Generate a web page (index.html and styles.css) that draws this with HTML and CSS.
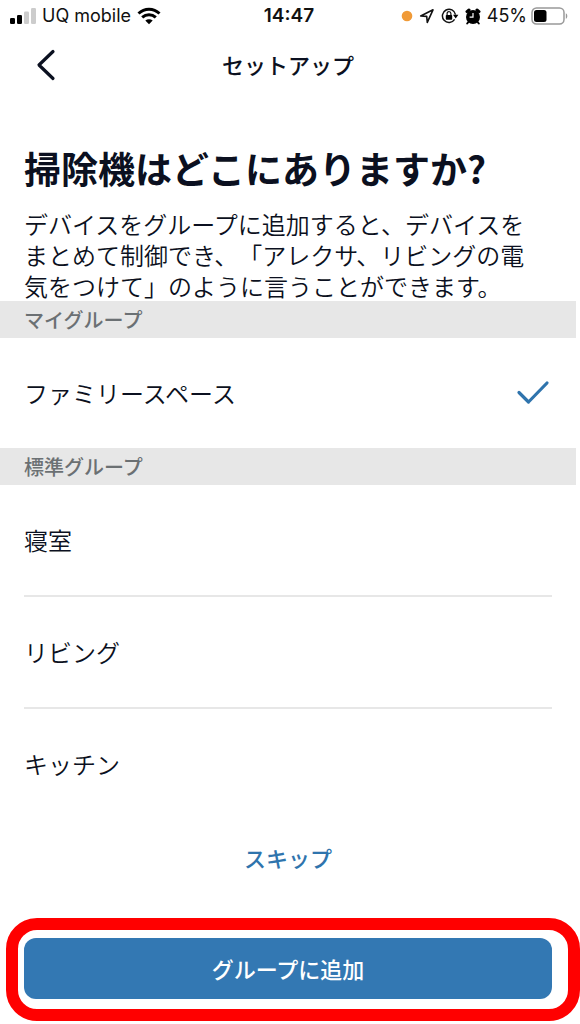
FILE: index.html
```html
<!DOCTYPE html>
<html lang="ja">
<head>
<meta charset="utf-8">
<meta name="viewport" content="width=device-width, initial-scale=1">
<title>セットアップ</title>
<link rel="stylesheet" href="styles.css">
</head>
<body>
<div class="screen">
  <div class="status">
    <div class="status-side">
      <svg class="signal" width="26" height="16" viewBox="0 0 26 16" aria-hidden="true">
        <rect x="0" y="10" width="5" height="6" rx="1.2"/>
        <rect x="7" y="7" width="5" height="9" rx="1.2"/>
        <rect x="14" y="3.500" width="5" height="12.500" rx="1.200" fill="#ccc"/>
        <rect x="21" y="0" width="5" height="16" rx="1.200" fill="#ccc"/>
      </svg>
      <span>UQ mobile</span>
      <svg width="24" height="18" viewBox="0 0 24 18" aria-hidden="true">
        <path d="M1.500 6.500C7.500.700 16.500.700 22.500 6.500M5.200 10.400c4-3.700 9.600-3.700 13.600 0" fill="none" stroke="#000" stroke-width="3"/>
        <path d="M12 17.200l-3.700-3.700c2.200-1.800 5.200-1.800 7.400 0z"/>
      </svg>
    </div>
    <time class="clock">14:47</time>
    <div class="status-side status-right">
      <svg width="12" height="12" viewBox="0 0 12 12" aria-hidden="true"><circle cx="6" cy="6" r="5.300" fill="#f09a37"/></svg>
      <svg width="16" height="16" viewBox="0 0 16 16" aria-hidden="true"><path d="M1.700 8L14 1.800 8.300 14.300 7.700 8.400z" fill="none" stroke="#111" stroke-width="1.600" stroke-linejoin="round"/></svg>
      <svg width="18" height="16" viewBox="0 0 18 16" aria-hidden="true">
        <path d="M13.600 11.400A6.600 6.600 0 1 1 14.500 6.600" fill="none" stroke="#111" stroke-width="1.500"/>
        <path d="M12 6.800h5.400l-2.700 3.600z"/>
        <rect x="4.800" y="7" width="6.400" height="4.800" rx=".8"/>
        <path d="M6.100 7.300V5.600a1.900 1.900 0 0 1 3.800 0v1.700" fill="none" stroke="#111" stroke-width="1.200"/>
      </svg>
      <svg width="16" height="17" viewBox="0 0 16 17" aria-hidden="true">
        <circle cx="8" cy="9" r="7"/>
        <path d="M2 3.600l2-1.600M14 3.600l-2-1.600" stroke="#000" stroke-width="3" stroke-linecap="round"/>
        <path d="M3.800 13.500l-1.600 2M12.200 13.500l1.600 2" stroke="#000" stroke-width="2" stroke-linecap="round"/>
        <path d="M8 5V9.200H4.600" fill="none" stroke="#fff" stroke-width="1.200"/>
      </svg>
      <span>45%</span>
      <svg class="battery" width="37" height="18" viewBox="0 0 37 18" aria-hidden="true">
        <rect x="1" y="1" width="32" height="16" rx="4.500" fill="none" stroke="#999" stroke-width="1.500"/>
        <rect x="3" y="3" width="12.500" height="12" rx="2.500"/>
        <path d="M34.800 6.200c2 .8 2 4.800 0 5.600z" fill="#999"/>
      </svg>
    </div>
  </div>

  <header class="nav">
    <button class="back" type="button" aria-label="戻る">
      <svg width="20" height="32" viewBox="0 0 20 32" aria-hidden="true"><path d="M17 2.500L3 16l14 13.500" fill="none" stroke="#0b1020" stroke-width="3.200" stroke-linecap="round" stroke-linejoin="round"/></svg>
    </button>
    <h2 class="nav-title">セットアップ</h2>
  </header>

  <main>
    <h1 class="title">掃除機はどこにありますか?</h1>
    <p class="lead">デバイスをグループに追加すると、デバイスを<br>まとめて制御でき、「アレクサ、リビングの電<br>気をつけて」のように言うことができます。</p>
    <h3 class="group">マイグループ</h3>
    <ul class="list">
      <li><button class="item" type="button" aria-pressed="true">ファミリースペース
        <svg width="34" height="26" viewBox="0 0 34 26" aria-hidden="true"><path d="M3 12.500l9.500 9.500L31 3" fill="none" stroke="#2f74ad" stroke-width="3.200" stroke-linecap="round" stroke-linejoin="round"/></svg>
      </button></li>
    </ul>
    <h3 class="group">標準グループ</h3>
    <ul class="list">
      <li><button class="item" type="button">寝室</button></li>
      <li><button class="item" type="button">リビング</button></li>
      <li><button class="item" type="button">キッチン</button></li>
    </ul>
  </main>

  <footer class="actions">
    <button class="skip" type="button">スキップ</button>
    <div class="primary-wrap">
      <button class="primary" type="button">グループに追加</button>
    </div>
  </footer>
</div>
</body>
</html>
```
FILE: styles.css
```css
* { box-sizing: border-box; }
body {
  margin: 0;
  background: #fff;
  color: #0b1020;
  font-family: "Noto Sans CJK JP", sans-serif;
  text-spacing-trim: space-all;
}
h1, h2, h3, p, ul { margin: 0; padding: 0; }
button {
  margin: 0;
  padding: 0;
  border: 0;
  background: none;
  color: inherit;
  font: inherit;
}
svg { display: block; flex: none; }
.screen { margin-right: 4px; }

.status {
  display: grid;
  grid-template-columns: 1fr auto 1fr;
  align-items: center;
  height: 32px;
  padding: 0 8px 0 10px;
  color: #111;
  font: 18px/32px Inter, sans-serif;
}
.status-side { display: flex; align-items: center; gap: 6px; white-space: nowrap; }
.status-right { justify-content: flex-end; }
.battery { margin-left: -2px; }
.clock { font-size: 19px; font-weight: 600; }

.nav {
  display: grid;
  grid-template-columns: 44px 1fr 44px;
  align-items: center;
  height: 66px;
  padding: 0 24px;
}
.back { display: flex; justify-content: center; }
.nav-title { padding-bottom: 2px; font-size: 22px; line-height: 32px; font-weight: 500; text-align: center; }

.title { padding: 43px 24px 0; font-size: 37px; line-height: 54px; font-weight: 700; white-space: nowrap; }
.lead { padding: 13px 24px 0; font-size: 24px; line-height: 31px; font-weight: 350; white-space: nowrap; }
.group {
  padding: 0 24px;
  background: #e7e7e7;
  color: #6b7073;
  font-size: 20px;
  line-height: 37px;
  font-weight: 500;
}
.list { list-style: none; padding: 0 24px; }
.list li + li { border-top: 2px solid #e7e7e7; }
.item {
  display: flex;
  align-items: center;
  justify-content: space-between;
  width: 100%;
  height: 110px;
  padding-right: 2px;
  font-size: 24px;
  line-height: 32px;
  font-weight: 350;
  text-align: left;
}

.actions { display: flex; flex-direction: column; padding: 22px 24px 0; }
.skip { align-self: center; color: #2f74ad; font-size: 22px; line-height: 32px; font-weight: 500; }
.primary-wrap { position: relative; margin: 65px 0 25px; }
.primary-wrap::after {
  content: "";
  position: absolute;
  inset: -20px -28px -22px -18px;
  border: 12px solid #f00;
  border-radius: 31px;
  pointer-events: none;
}
.primary {
  width: 100%;
  height: 61px;
  padding-bottom: 2px;
  border-radius: 12px;
  background: #3378b3;
  color: #fff;
  font-size: 22px;
  font-weight: 500;
}
```
